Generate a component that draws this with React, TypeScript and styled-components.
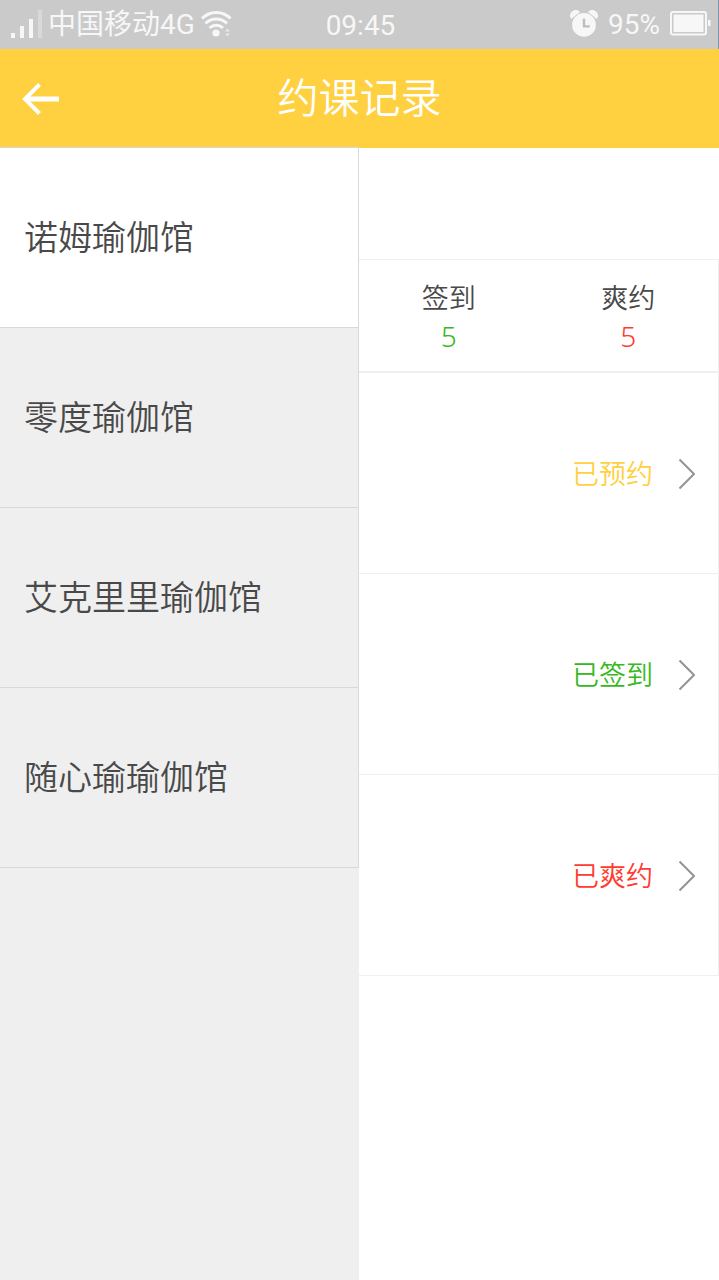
import React from "react";
import styled, { createGlobalStyle } from "styled-components";

const GlobalStyle = createGlobalStyle`
  * { box-sizing: border-box; }
  body {
    margin: 0;
    background: #fff;
    color: #494949;
    font-family: "Noto Sans", "Noto Sans CJK SC", sans-serif;
    font-weight: 350;
  }
  button { font: inherit; color: inherit; border: 0; padding: 0; background: none; cursor: pointer; }
`;

const Page = styled.div`
  display: flex;
  flex-direction: column;
  min-height: 100vh;
`;

const StatusBar = styled.div`
  display: grid;
  grid-template-columns: 1fr auto 1fr;
  align-items: center;
  height: 49px;
  padding: 0 7px 0 10px;
  background: #cacaca;
  border-right: 1px solid #7d94a8;
  color: #f7f7f7;
  font-family: Roboto, "Noto Sans CJK SC", sans-serif;
  font-size: 28px;
  font-weight: 400;
`;

const StatusGroup = styled.div<{ $end?: boolean }>`
  display: flex;
  align-items: center;
  justify-content: ${(p) => (p.$end ? "flex-end" : "flex-start")};
  gap: ${(p) => (p.$end ? "10px" : "6px")};
  padding-bottom: 2px;
  white-space: nowrap;

  svg { flex: none; display: block; }
`;

const StatusText = styled.span`
  padding-top: 3px;
  line-height: 44px;
`;

const Clock = styled.time`
  padding-top: 3px;
  line-height: 46px;
`;

const Header = styled.header`
  display: grid;
  grid-template-columns: 80px 1fr 80px;
  align-items: center;
  height: 98px;
  background: #ffd03f;
  color: #fff;
`;

const BackButton = styled.button`
  display: flex;
  align-items: center;
  height: 98px;
  padding: 2px 0 0 22px;
`;

const Title = styled.h1`
  margin: 0;
  padding-bottom: 2px;
  font-size: 41px;
  line-height: 96px;
  font-weight: inherit;
  text-align: center;
`;

const Body = styled.div`
  flex: 1;
  display: grid;
  grid-template-columns: 359fr 360fr;
`;

const Sidebar = styled.nav`
  background: #efefef;
  border-top: 1px solid #d9d9d9;
`;

const Venue = styled.button<{ $active?: boolean }>`
  display: block;
  width: 100%;
  height: 180px;
  padding: 0 24px 4px;
  border-right: 1px solid #d9d9d9;
  border-bottom: 1px solid #d9d9d9;
  background: ${(p) => (p.$active ? "#fff" : "#efefef")};
  font-size: 34px;
  text-align: left;
`;

const Content = styled.main`
  border-top: 1px solid #ffd03f;
  padding-top: 111px;
`;

const Stats = styled.dl`
  display: grid;
  grid-template-columns: 1fr 1fr;
  height: 113px;
  margin: 0;
  padding-top: 18px;
  border: 1px solid #efefef;
  border-left: 0;
  text-align: center;
`;

const StatLabel = styled.dt`
  font-size: 27px;
  line-height: 40px;
`;

const StatValue = styled.dd<{ $color: string }>`
  margin: 0;
  color: ${(p) => p.$color};
  font-size: 28px;
  line-height: 36px;
`;

const Records = styled.ul`
  list-style: none;
  margin: 0;
  padding: 0;
  border-top: 1px solid #efefef;
  border-right: 1px solid #efefef;
`;

const RecordButton = styled.button<{ $color: string }>`
  display: flex;
  align-items: center;
  justify-content: flex-end;
  gap: 25px;
  width: 100%;
  height: 201px;
  padding: 2px 23px 0 0;
  border-bottom: 1px solid #efefef;
  color: ${(p) => p.$color};
  font-size: 27px;
`;

const RecordStatus = styled.span`
  padding-bottom: 3px;
`;

const SignalIcon = () => (
  <svg width="32" height="30" viewBox="0 0 32 30" fill="#f7f7f7" aria-hidden="true">
    <rect x="1" y="24" width="4" height="5" />
    <rect x="10" y="17" width="4" height="12" />
    <rect x="19" y="10" width="4" height="19" />
    <rect x="28" y="1" width="4" height="28" opacity=".35" />
  </svg>
);

const WifiIcon = () => (
  <svg width="31" height="28" viewBox="0 0 31 28" fill="none" stroke="#f7f7f7" strokeWidth="3" aria-hidden="true">
    <path d="M1 8.500C9 .5 21.500 .5 29.500 8.500" />
    <path d="M4.500 13.500c6-6 15.500-6 21.500 0" />
    <path d="M8.500 18c4-3.800 9.500-3.800 13.500 0" />
    <circle cx="15" cy="23" r="3.600" fill="#f7f7f7" stroke="none" />
    <path d="M24 21.500l2.500-3 2.500 3zM24 23.500l2.500 3 2.500-3z" fill="#f7f7f7" stroke="none" opacity=".65" />
  </svg>
);

const AlarmIcon = () => (
  <svg width="28" height="28" viewBox="0 0 29 29" aria-hidden="true">
    <path d="M1.500 8A5 5 0 0 1 9 2z" fill="#f7f7f7" stroke="#f7f7f7" strokeWidth="2" strokeLinejoin="round" />
    <path d="M27.500 8A5 5 0 0 0 20 2z" fill="#f7f7f7" stroke="#f7f7f7" strokeWidth="2" strokeLinejoin="round" />
    <circle cx="14.500" cy="15.500" r="13" fill="#cacaca" />
    <circle cx="14.500" cy="15.500" r="12.300" fill="#f7f7f7" />
    <path d="M14.500 9v8h6" fill="none" stroke="#bdbdbd" strokeWidth="2.500" />
  </svg>
);

const BatteryIcon = () => (
  <svg width="41" height="25" viewBox="0 0 41 25" fill="none" aria-hidden="true">
    <rect x="1" y="1" width="35" height="22.500" rx="2" stroke="#f7f7f7" strokeWidth="2" />
    <rect x="3.500" y="3.500" width="30" height="17.500" fill="#f7f7f7" />
    <rect x="38" y="9" width="2.500" height="6" fill="#f7f7f7" />
  </svg>
);

const BackIcon = () => (
  <svg width="37" height="32" viewBox="0 0 37 32" fill="none" stroke="#fff" aria-hidden="true">
    <path d="M17.500 1.500L3 16l14.500 14.500" strokeWidth="4" />
    <path d="M3 16h34" strokeWidth="5" />
  </svg>
);

const ChevronIcon = () => (
  <svg width="17" height="32" viewBox="0 0 17 32" fill="none" stroke="#949494" strokeWidth="2" aria-hidden="true">
    <path d="M1.500 1.500L16 16 1.500 30.500" />
  </svg>
);

const venues = ["诺姆瑜伽馆", "零度瑜伽馆", "艾克里里瑜伽馆", "随心瑜瑜伽馆"];

const stats = [
  { label: "签到", value: 5, color: "#35b91d" },
  { label: "爽约", value: 5, color: "#ff3b30" },
];

const records = [
  { status: "已预约", color: "#ffd03f" },
  { status: "已签到", color: "#35b91d" },
  { status: "已爽约", color: "#ff3b30" },
];

export default function App() {
  return (
    <Page>
      <GlobalStyle />
      <StatusBar>
        <StatusGroup>
          <SignalIcon />
          <StatusText>中国移动4G</StatusText>
          <WifiIcon />
        </StatusGroup>
        <Clock>09:45</Clock>
        <StatusGroup $end>
          <AlarmIcon />
          <StatusText>95%</StatusText>
          <BatteryIcon />
        </StatusGroup>
      </StatusBar>
      <Header>
        <BackButton type="button" aria-label="返回">
          <BackIcon />
        </BackButton>
        <Title>约课记录</Title>
      </Header>
      <Body>
        <Sidebar>
          {venues.map((name, i) => (
            <Venue key={name} type="button" $active={i === 0}>
              {name}
            </Venue>
          ))}
        </Sidebar>
        <Content>
          <Stats>
            {stats.map((s) => (
              <div key={s.label}>
                <StatLabel>{s.label}</StatLabel>
                <StatValue $color={s.color}>{s.value}</StatValue>
              </div>
            ))}
          </Stats>
          <Records>
            {records.map((r) => (
              <li key={r.status}>
                <RecordButton type="button" $color={r.color}>
                  <RecordStatus>{r.status}</RecordStatus>
                  <ChevronIcon />
                </RecordButton>
              </li>
            ))}
          </Records>
        </Content>
      </Body>
    </Page>
  );
}
